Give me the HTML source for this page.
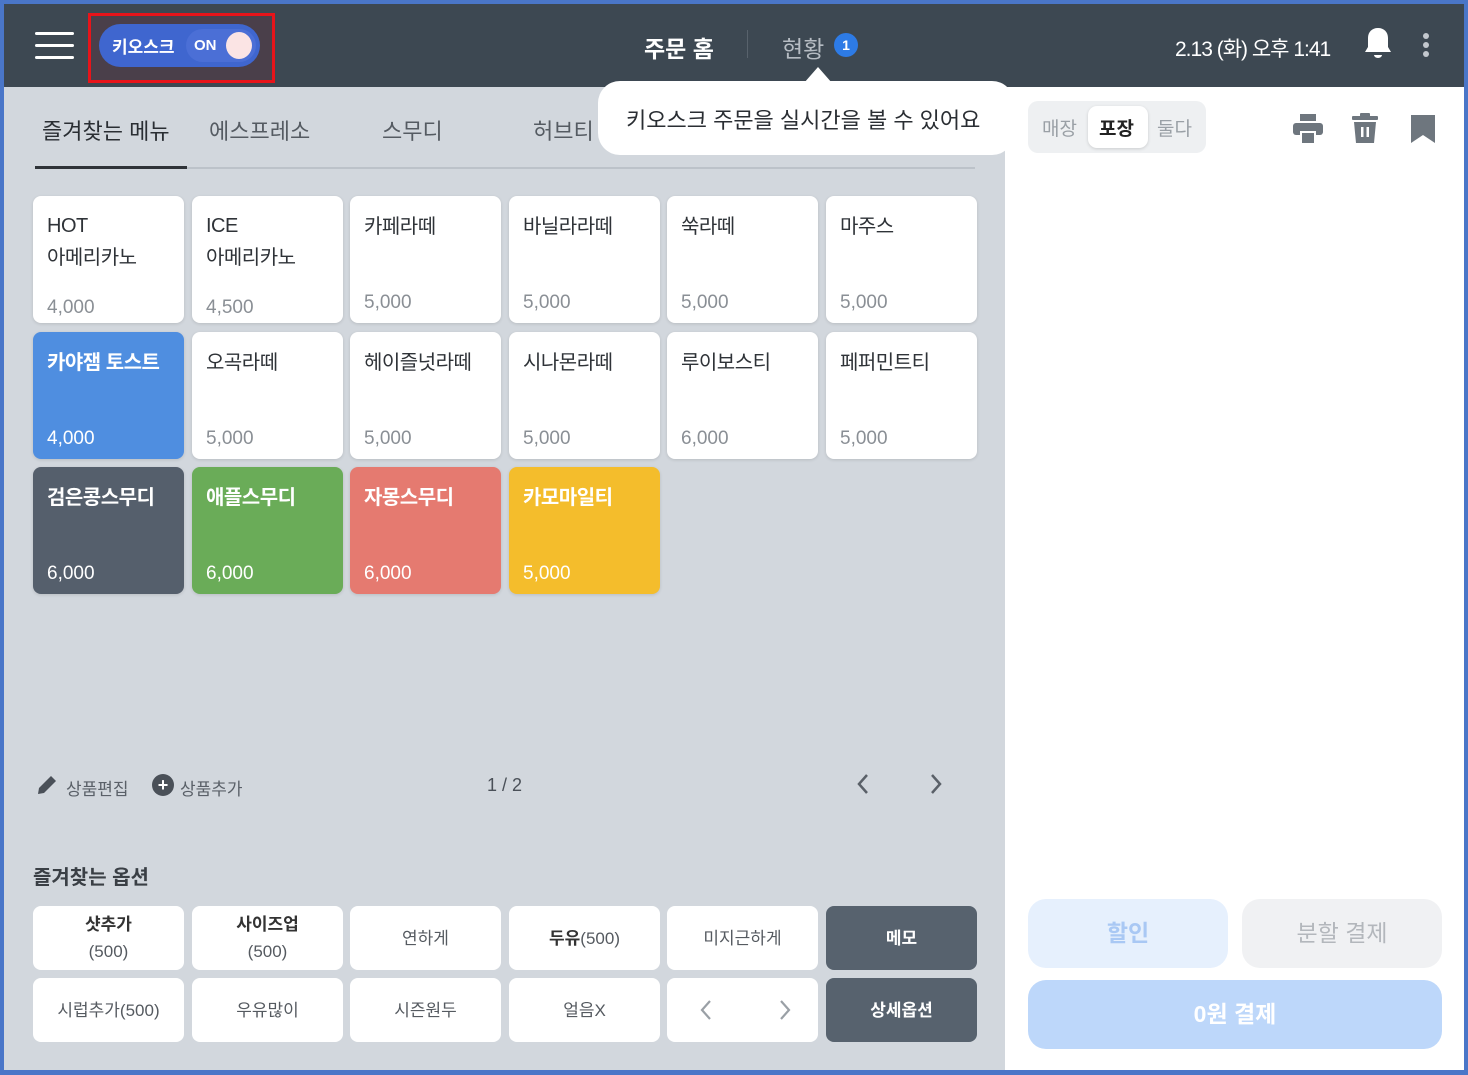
<!DOCTYPE html>
<html><head><meta charset="utf-8"><style>
*{margin:0;padding:0;box-sizing:border-box}
body{width:1468px;height:1075px;overflow:hidden;background:#4a76c8;font-family:"Liberation Sans","Noto Sans CJK KR",sans-serif;position:relative}
.abs{position:absolute}
#hdr{left:4px;top:4px;width:1460px;height:83px;background:#3d4852}
#left{left:4px;top:87px;width:1001px;height:983px;background:#d2d7dd}
#right{left:1005px;top:87px;width:459px;height:983px;background:#fff}
.card{position:absolute;width:151px;height:127px;border-radius:8px;background:#fff;box-shadow:0 1px 3px rgba(0,0,0,.12);font-size:20px;color:#2f3338;padding:14px 14px;letter-spacing:-0.5px}
.card .p{position:absolute;left:14px;top:96px;font-size:19px;color:#8a8f95;font-weight:normal;letter-spacing:0}
.card.c .p{color:#fff}
.card.c{color:#fff;font-weight:bold}
.opt{position:absolute;width:151px;height:64px;border-radius:8px;background:#fff;display:flex;align-items:center;justify-content:center;text-align:center;font-size:17px;color:#555a60;line-height:27px}
.tab{position:absolute;top:114px;font-size:22px;color:#555b62}
</style></head><body>
<div id="hdr" class="abs"></div>
<div id="left" class="abs"></div>
<div id="right" class="abs"></div>

<div class="abs" style="left:35px;top:32px;width:39px;height:3px;background:#fff;border-radius:2px"></div>
<div class="abs" style="left:35px;top:44px;width:39px;height:3px;background:#fff;border-radius:2px"></div>
<div class="abs" style="left:35px;top:56px;width:39px;height:3px;background:#fff;border-radius:2px"></div>
<div class="abs" style="left:88px;top:13px;width:187px;height:70px;border:3px solid #e8141a;background:#4a3f4a"></div>
<div class="abs" style="left:99px;top:24px;width:161px;height:43px;border-radius:22px;background:#3f66cf"></div>
<div class="abs" style="left:112px;top:33px;color:#fff;font-size:17px;font-weight:bold">키오스크</div>
<div class="abs" style="left:186px;top:29px;width:70px;height:33px;border-radius:17px;background:#4b6fd6"></div>
<div class="abs" style="left:194px;top:37px;color:#fff;font-size:15px;font-weight:bold">ON</div>
<div class="abs" style="left:226px;top:32px;width:26px;height:27px;border-radius:50%;background:#fbe4e4"></div>
<div class="abs" style="left:644px;top:30px;color:#fff;font-size:23px;font-weight:bold">주문 홈</div>
<div class="abs" style="left:747px;top:30px;width:1px;height:28px;background:#58626c"></div>
<div class="abs" style="left:782px;top:30px;color:#b6bcc3;font-size:23px">현황</div>
<div class="abs" style="left:834px;top:33px;width:24px;height:24px;border-radius:50%;background:#2d7be6;color:#fff;font-size:14px;font-weight:bold;text-align:center;line-height:24px">1</div>
<div class="abs" style="left:1175px;top:33px;color:#fff;font-size:21px;letter-spacing:-1px">2.13 (화) 오후 1:41</div>
<svg class="abs" style="left:1362px;top:26px" width="32" height="36" viewBox="0 0 32 36"><path d="M16 2c-6 0-10 4-10 10v9l-3 5h26l-3-5v-9c0-6-4-10-10-10z" fill="#fff"/><path d="M12 29h8a4 3 0 0 1-8 0z" fill="#fff"/></svg>
<div class="abs" style="left:1423px;top:33px;width:6px;height:6px;border-radius:50%;background:#c3c8ce"></div>
<div class="abs" style="left:1423px;top:42px;width:6px;height:6px;border-radius:50%;background:#c3c8ce"></div>
<div class="abs" style="left:1423px;top:51px;width:6px;height:6px;border-radius:50%;background:#c3c8ce"></div>

<div class="tab" style="left:42px;color:#2a2e33">즐겨찾는 메뉴</div>
<div class="tab" style="left:209px">에스프레소</div>
<div class="tab" style="left:382px">스무디</div>
<div class="tab" style="left:533px">허브티</div>
<div class="abs" style="left:35px;top:167px;width:940px;height:2px;background:#bcc2c9"></div>
<div class="abs" style="left:35px;top:166px;width:152px;height:3px;background:#2f3338"></div>

<div class="abs" style="left:598px;top:81px;width:416px;height:74px;background:#fff;border-radius:22px"></div>
<div class="abs" style="left:804px;top:67px;width:0;height:0;border-left:14px solid transparent;border-right:14px solid transparent;border-bottom:16px solid #fff"></div>
<div class="abs" style="left:626px;top:103px;color:#2a2e33;font-size:22px">키오스크 주문을 실시간을 볼 수 있어요</div>

<div class="abs" style="left:1028px;top:101px;width:178px;height:52px;border-radius:10px;background:#eef0f2"></div>
<div class="abs" style="left:1088px;top:106px;width:60px;height:42px;border-radius:9px;background:#fff;box-shadow:0 1px 3px rgba(0,0,0,.15)"></div>
<div class="abs" style="left:1042px;top:114px;color:#9aa0a6;font-size:19px">매장</div>
<div class="abs" style="left:1099px;top:114px;color:#222;font-size:19px;font-weight:bold">포장</div>
<div class="abs" style="left:1157px;top:114px;color:#9aa0a6;font-size:19px">둘다</div>
<svg class="abs" style="left:1292px;top:112px" width="32" height="32" viewBox="0 0 32 32" fill="#6e767e"><rect x="8" y="2" width="16" height="7"/><rect x="1" y="11" width="30" height="12" rx="3"/><rect x="8" y="19" width="16" height="12" fill="#fff"/><rect x="10" y="21" width="12" height="10"/></svg>
<svg class="abs" style="left:1351px;top:112px" width="28" height="32" viewBox="0 0 28 32" fill="#6e767e"><rect x="9" y="1" width="10" height="4" rx="1"/><rect x="1" y="4" width="26" height="4" rx="1"/><path d="M3 10h22l-2 21H5z"/><rect x="10" y="15" width="2.5" height="10" fill="#fff"/><rect x="15.5" y="15" width="2.5" height="10" fill="#fff"/></svg>
<svg class="abs" style="left:1410px;top:114px" width="26" height="30" viewBox="0 0 26 30"><path d="M1 1h24v28l-12-8-12 8z" fill="#6e767e"/></svg>

<div class="card" style="left:33px;top:196px;line-height:32px">HOT<br>아메리카노<span class="p">4,000</span></div>
<div class="card" style="left:192px;top:196px;line-height:32px">ICE<br>아메리카노<span class="p">4,500</span></div>
<div class="card" style="left:350px;top:196px">카페라떼<span class="p">5,000</span></div>
<div class="card" style="left:509px;top:196px">바닐라라떼<span class="p">5,000</span></div>
<div class="card" style="left:667px;top:196px">쑥라떼<span class="p">5,000</span></div>
<div class="card" style="left:826px;top:196px">마주스<span class="p">5,000</span></div>

<div class="card c" style="left:33px;top:332px;background:#4f8ee0">카야잼 토스트<span class="p">4,000</span></div>
<div class="card" style="left:192px;top:332px">오곡라떼<span class="p">5,000</span></div>
<div class="card" style="left:350px;top:332px">헤이즐넛라떼<span class="p">5,000</span></div>
<div class="card" style="left:509px;top:332px">시나몬라떼<span class="p">5,000</span></div>
<div class="card" style="left:667px;top:332px">루이보스티<span class="p">6,000</span></div>
<div class="card" style="left:826px;top:332px">페퍼민트티<span class="p">5,000</span></div>

<div class="card c" style="left:33px;top:467px;background:#555f6c">검은콩스무디<span class="p">6,000</span></div>
<div class="card c" style="left:192px;top:467px;background:#6aac58">애플스무디<span class="p">6,000</span></div>
<div class="card c" style="left:350px;top:467px;background:#e57a70">자몽스무디<span class="p">6,000</span></div>
<div class="card c" style="left:509px;top:467px;background:#f4bd2c">카모마일티<span class="p">5,000</span></div>

<svg class="abs" style="left:36px;top:774px" width="22" height="22" viewBox="0 0 22 22"><path d="M2 20l1-6L15 2l5 5L8 19z" fill="#4a5058"/></svg>
<div class="abs" style="left:66px;top:775px;font-size:17px;color:#5a6068">상품편집</div>
<div class="abs" style="left:152px;top:774px;width:22px;height:22px;border-radius:50%;background:#4a5058;color:#fff;font-size:18px;font-weight:bold;text-align:center;line-height:22px">+</div>
<div class="abs" style="left:180px;top:775px;font-size:17px;color:#5a6068">상품추가</div>
<div class="abs" style="left:487px;top:775px;font-size:18px;color:#4a5058">1 / 2</div>
<svg class="abs" style="left:855px;top:772px" width="16" height="24" viewBox="0 0 16 24"><path d="M12 3L4 12l8 9" stroke="#5a6068" stroke-width="2.5" fill="none"/></svg>
<svg class="abs" style="left:928px;top:772px" width="16" height="24" viewBox="0 0 16 24"><path d="M4 3l8 9-8 9" stroke="#5a6068" stroke-width="2.5" fill="none"/></svg>

<div class="abs" style="left:33px;top:861px;font-size:20px;font-weight:bold;color:#3a3f45">즐겨찾는 옵션</div>

<div class="opt" style="left:33px;top:906px"><div><b style="color:#333">샷추가</b><br>(500)</div></div>
<div class="opt" style="left:192px;top:906px"><div><b style="color:#333">사이즈업</b><br>(500)</div></div>
<div class="opt" style="left:350px;top:906px">연하게</div>
<div class="opt" style="left:509px;top:906px"><span><b style="color:#333">두유</b>(500)</span></div>
<div class="opt" style="left:667px;top:906px">미지근하게</div>
<div class="opt" style="left:826px;top:906px;background:#57626e;color:#fff;font-weight:bold">메모</div>
<div class="opt" style="left:33px;top:978px">시럽추가(500)</div>
<div class="opt" style="left:192px;top:978px">우유많이</div>
<div class="opt" style="left:350px;top:978px">시즌원두</div>
<div class="opt" style="left:509px;top:978px">얼음X</div>
<div class="opt" style="left:667px;top:978px"></div>
<svg class="abs" style="left:698px;top:998px" width="16" height="24" viewBox="0 0 16 24"><path d="M12 3L4 12l8 9" stroke="#9aa0a6" stroke-width="2.2" fill="none"/></svg>
<svg class="abs" style="left:777px;top:998px" width="16" height="24" viewBox="0 0 16 24"><path d="M4 3l8 9-8 9" stroke="#9aa0a6" stroke-width="2.2" fill="none"/></svg>
<div class="opt" style="left:826px;top:978px;background:#57626e;color:#fff;font-weight:bold">상세옵션</div>

<div class="abs" style="left:1028px;top:899px;width:200px;height:69px;border-radius:18px;background:#e6f0fd;color:#a9c8f4;font-size:23px;font-weight:bold;text-align:center;line-height:69px">할인</div>
<div class="abs" style="left:1242px;top:899px;width:200px;height:69px;border-radius:18px;background:#f0f1f3;color:#b3b7bc;font-size:23px;text-align:center;line-height:69px">분할 결제</div>
<div class="abs" style="left:1028px;top:980px;width:414px;height:69px;border-radius:18px;background:#bdd7fa;color:#fff;font-size:23px;font-weight:bold;text-align:center;line-height:69px">0원 결제</div>
</body></html>
